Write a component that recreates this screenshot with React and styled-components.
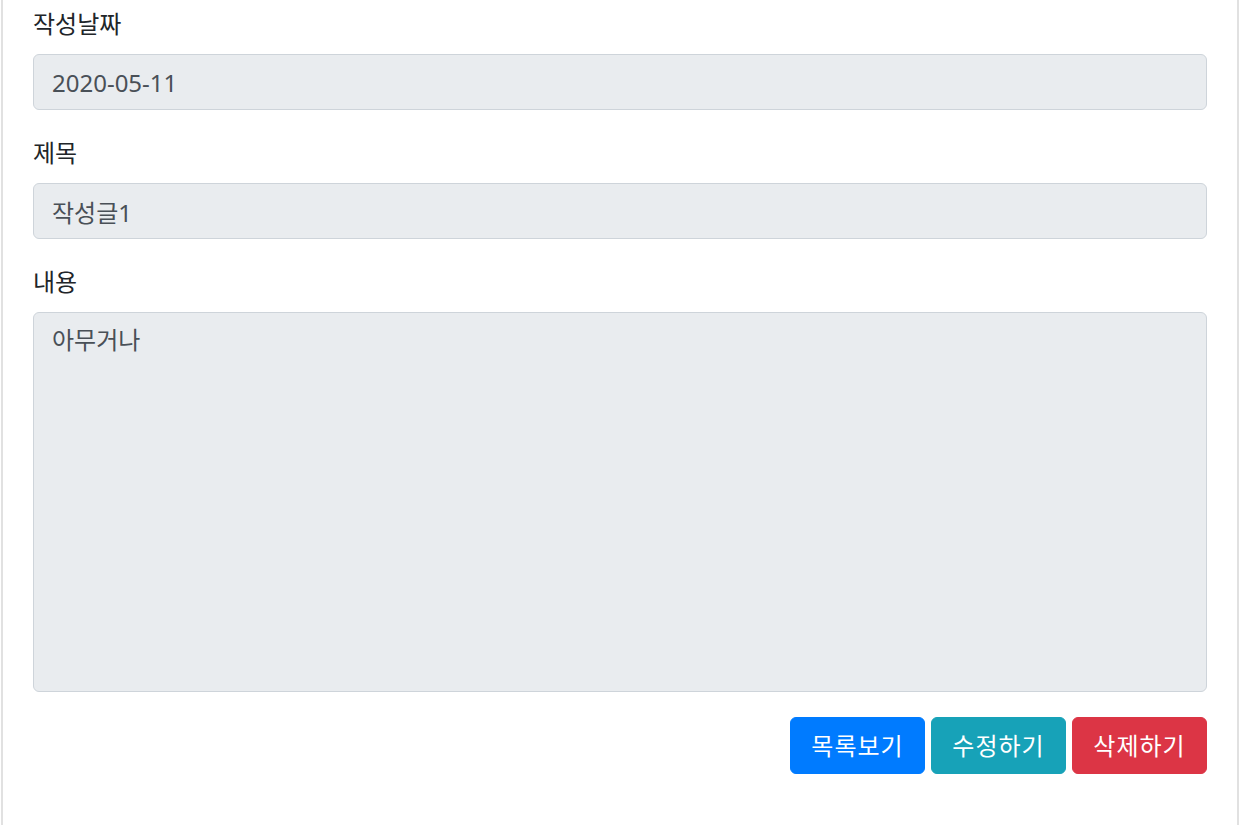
import React from 'react';
import styled, { createGlobalStyle } from 'styled-components';

const GlobalStyle = createGlobalStyle`
  html, body {
    margin: 0;
    padding: 0;
    background: #fff;
  }
  body {
    font-family: "Noto Sans", "Noto Sans CJK KR", sans-serif;
    color: #212529;
  }
  * { box-sizing: border-box; }
`;

const Page = styled.div`
  padding: 0 1px;
  min-height: 825px;
  display: flex;
`;

const Card = styled.div`
  flex: 1;
  border-left: 2px solid #e1e1e1;
  border-right: 2px solid #e1e1e1;
  padding: 6px 30px 40px;
`;

const FormGroup = styled.div`
  margin-bottom: 25px;
`;

const Label = styled.label`
  display: block;
  font-size: 24px;
  line-height: 36px;
  margin-bottom: 12px;
  color: #212529;
`;

const fieldStyles = `
  display: block;
  width: 100%;
  font-family: "Noto Sans", "Noto Sans CJK KR", sans-serif;
  font-size: 24px;
  line-height: 36px;
  color: #495057;
  background: #e9ecef;
  border: 1px solid #ced4da;
  border-radius: 6px;
  padding: 9px 18px;
  outline: none;
  margin: 0;
`;

const Input = styled.input`
  ${fieldStyles}
  height: 56px;
`;

const TextArea = styled.textarea`
  ${fieldStyles}
  height: 380px;
  resize: none;
`;

const ButtonRow = styled.div`
  display: flex;
  justify-content: flex-end;
  gap: 6px;
`;

const colors = {
  primary: '#007bff',
  info: '#17a2b8',
  danger: '#dc3545',
};

const Button = styled.button`
  font-family: "Noto Sans", "Noto Sans CJK KR", sans-serif;
  font-size: 24px;
  line-height: 36px;
  letter-spacing: 1px;
  padding: 9px 18px;
  height: 57px;
  width: 135px;
  color: #fff;
  background: ${(p) => colors[p.$variant]};
  border: 1px solid ${(p) => colors[p.$variant]};
  border-radius: 6px;
  cursor: pointer;
`;

export default function App() {
  return (
    <>
      <GlobalStyle />
      <Page>
        <Card>
          <FormGroup>
            <Label>작성날짜</Label>
            <Input readOnly value="2020-05-11" />
          </FormGroup>
          <FormGroup>
            <Label>제목</Label>
            <Input readOnly value="작성글1" />
          </FormGroup>
          <FormGroup>
            <Label>내용</Label>
            <TextArea readOnly value="아무거나" />
          </FormGroup>
          <ButtonRow>
            <Button $variant="primary">목록보기</Button>
            <Button $variant="info">수정하기</Button>
            <Button $variant="danger">삭제하기</Button>
          </ButtonRow>
        </Card>
      </Page>
    </>
  );
}
